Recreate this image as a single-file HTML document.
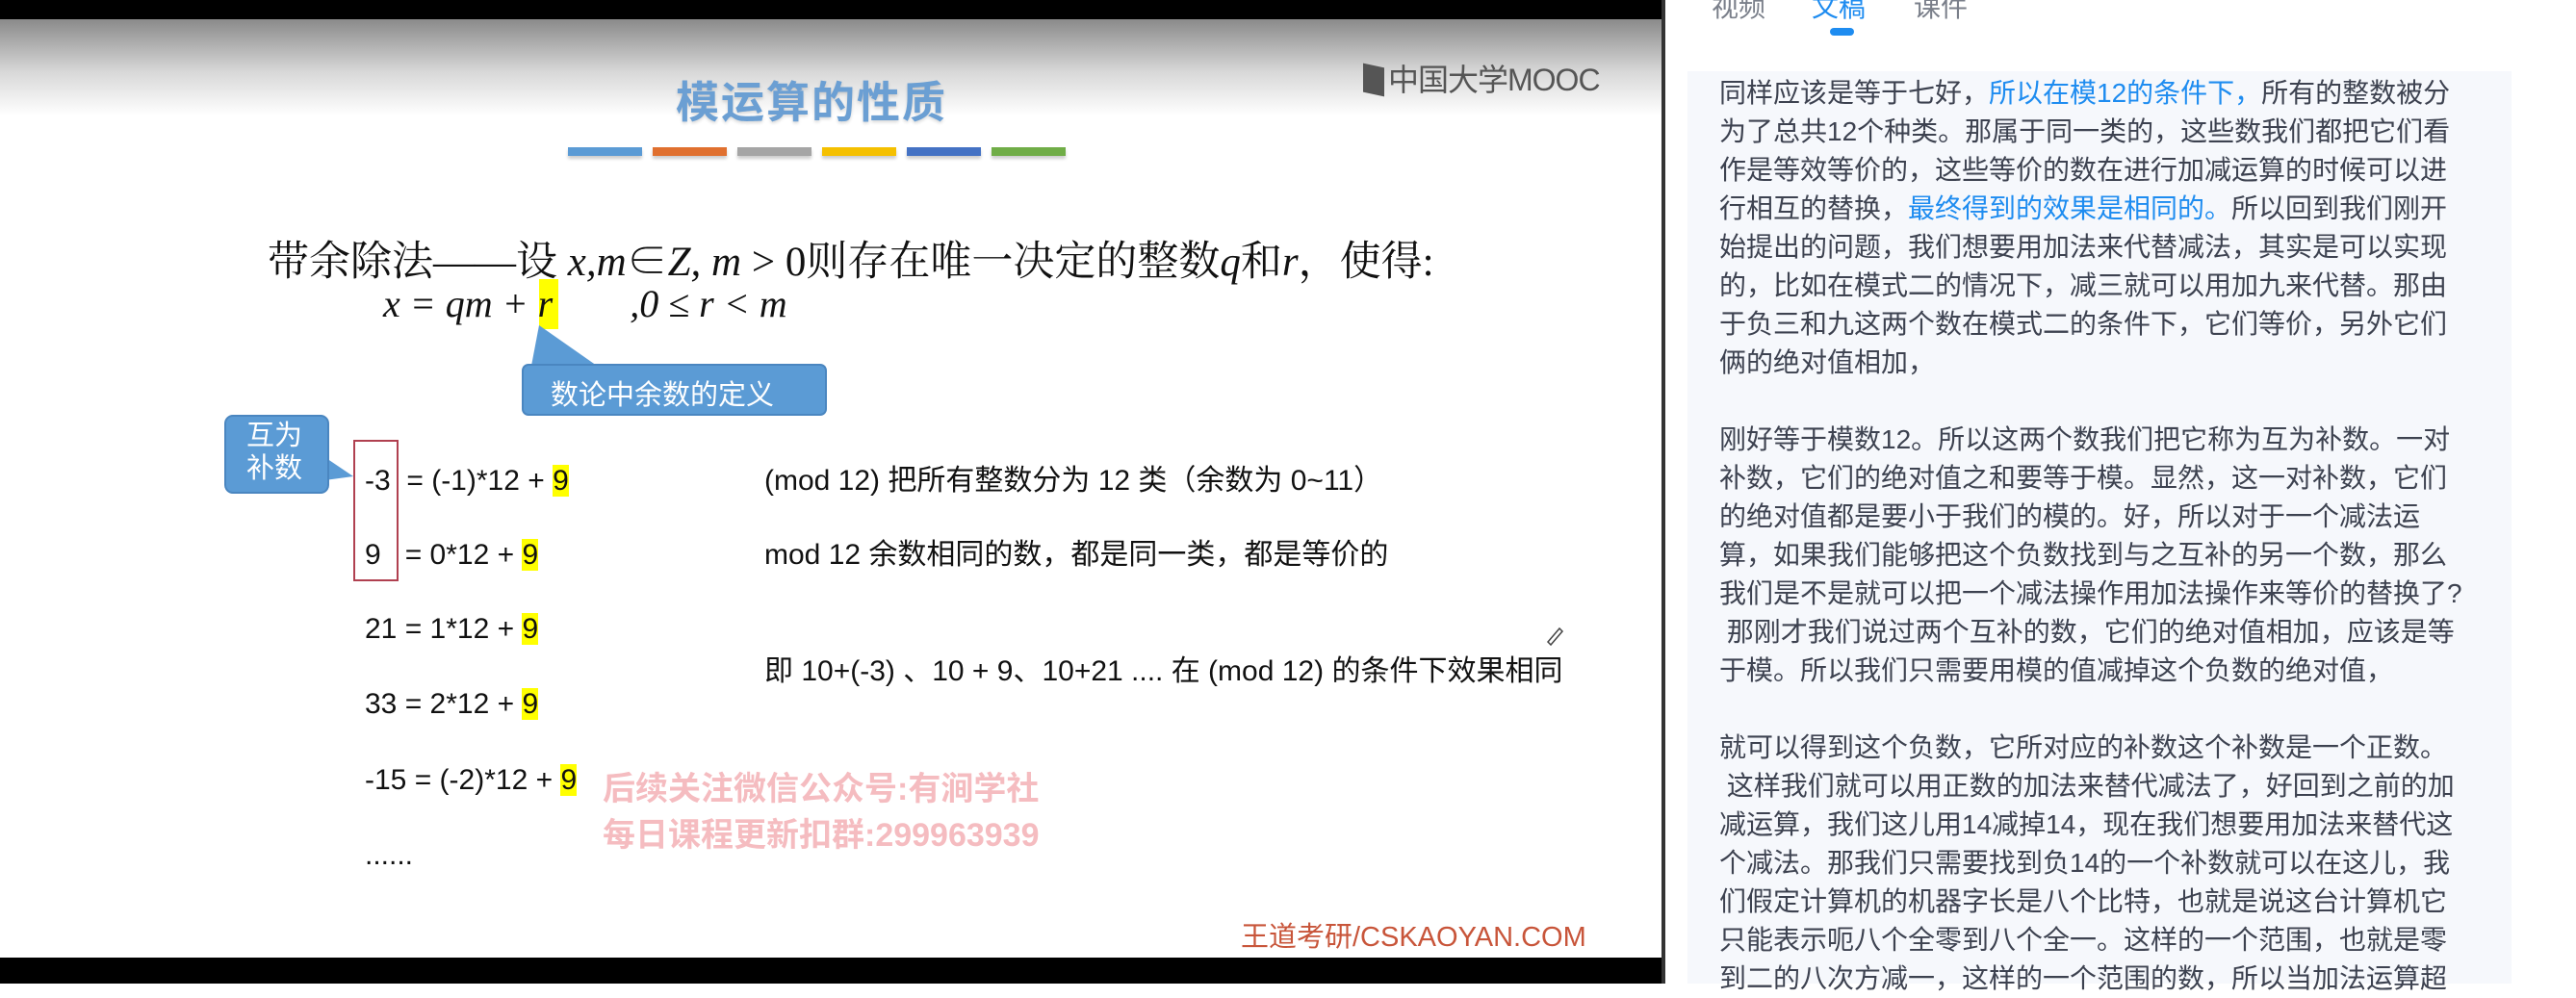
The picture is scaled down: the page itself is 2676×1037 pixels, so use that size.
<!DOCTYPE html>
<html><head><meta charset="utf-8"><style>
*{margin:0;padding:0;box-sizing:border-box}
body{width:2676px;height:1022px;overflow:hidden;background:#fff;position:relative;font-family:"Liberation Sans","Noto Sans CJK SC",sans-serif}
.a{position:absolute;white-space:nowrap}
#slide{position:absolute;left:0;top:0;width:1726px;height:1022px;background:#fff;overflow:hidden}
.bar{position:absolute;top:153px;width:77px;height:9px;box-shadow:0 3px 3px rgba(0,0,0,.2)}
.row{position:absolute;left:379px;font-size:30px;color:#111;line-height:40px}
.hl{background:#ffff00}
.rt{position:absolute;left:794px;font-size:30px;color:#111;line-height:40px}
#txt{position:absolute;left:1786px;top:77px;font-size:28px;line-height:40px;color:#3d4250;white-space:nowrap}
.b{color:#1e8cf0}
</style></head><body>
<div id="slide">
 <div class="a" style="left:0;top:0;width:1726px;height:20px;background:#000"></div>
 <div class="a" style="left:0;top:20px;width:1726px;height:100px;background:linear-gradient(#8a8a8a,#d8d8d8 55%,#fff)"></div>
 <div class="a" style="left:0;top:995px;width:1726px;height:27px;background:#000"></div>
 <div class="a" style="left:702px;top:70px;font-size:45px;color:#6b9fd3;font-weight:bold;letter-spacing:2px;text-shadow:0 2px 3px rgba(0,0,0,.15)">模运算的性质</div>
 <div class="a" style="left:1416px;top:58px;font-size:32px;color:#555;letter-spacing:-1px"><span style="display:inline-block;width:22px;height:30px;background:#555;vertical-align:-4px;margin-right:4px;transform:skewY(12deg)"></span>中国大学MOOC</div>
 <div class="bar" style="left:590px;background:#5b9bd5"></div>
 <div class="bar" style="left:678px;background:#e0702f"></div>
 <div class="bar" style="left:766px;background:#a5a5a5"></div>
 <div class="bar" style="left:854px;background:#f5c000"></div>
 <div class="bar" style="left:942px;background:#4472c4"></div>
 <div class="bar" style="left:1030px;background:#70ad47"></div>
 <div class="a" style="left:278px;top:238px;font-size:43px;color:#111;font-family:'Liberation Serif','Noto Serif CJK SC',serif">带余除法——设 <i>x,m</i>∈<i>Z, m</i> &gt; 0则存在唯一决定的整数<i>q</i>和<i>r</i>，使得:</div>
 <div class="a" style="left:560px;top:290px;width:20px;height:52px;background:#ffff00"></div>
 <div class="a" style="left:398px;top:292px;font-size:40px;color:#111;font-family:'Liberation Serif',serif;font-style:italic">x = qm + r<span style="display:inline-block;width:80px"></span>,0 ≤ r &lt; m</div>
 <svg class="a" style="left:0;top:0" width="1726" height="1022">
  <path d="M560 338 L620 380 L552 380 Z" fill="#5b9bd5"/>
  <rect x="543" y="379" width="315" height="52" rx="6" fill="#5b9bd5" stroke="#4a86c0" stroke-width="2"/>
  <path d="M330 470 L367 495 L330 500 Z" fill="#5b9bd5"/>
  <rect x="234" y="432" width="107" height="80" rx="8" fill="#5b9bd5" stroke="#4a86c0" stroke-width="2"/>
  <rect x="368" y="458" width="45" height="145" fill="none" stroke="#b04050" stroke-width="2"/>
  <path d="M1608 667 l12 -14 l3 3 l-12 14 z" fill="none" stroke="#444" stroke-width="1.5"/>
 </svg>
 <div class="a" style="left:572px;top:387px;font-size:29px;color:#fff">数论中余数的定义</div>
 <div class="a" style="left:256px;top:436px;font-size:29px;color:#fff;line-height:34px;white-space:normal;width:70px">互为<br>补数</div>
 <div class="row" style="top:480px">-3 &nbsp;= (-1)*12 + <span class="hl">9</span></div>
 <div class="row" style="top:557px">9 &nbsp;&nbsp;= 0*12 + <span class="hl">9</span></div>
 <div class="row" style="top:634px">21 = 1*12 + <span class="hl">9</span></div>
 <div class="row" style="top:712px">33 = 2*12 + <span class="hl">9</span></div>
 <div class="row" style="top:791px">-15 = (-2)*12 + <span class="hl">9</span></div>
 <div class="row" style="top:869px">......</div>
 <div class="rt" style="top:480px">(mod 12) 把所有整数分为 12 类（余数为 0~11）</div>
 <div class="rt" style="top:557px">mod 12 余数相同的数，都是同一类，都是等价的</div>
 <div class="rt" style="top:678px">即 10+(-3) 、10 + 9、10+21 .... 在 (mod 12) 的条件下效果相同</div>
 <div class="a" style="left:626px;top:796px;font-size:34px;font-weight:bold;color:#f5bcc0;line-height:48px">后续关注微信公众号:有涧学社<br>每日课程更新扣群:299963939</div>
 <div class="a" style="left:1289px;top:950px;font-size:29px;color:#c8553a">王道考研/CSKAOYAN.COM</div>
</div>
<div class="a" style="left:1726px;top:0;width:4px;height:1022px;background:#333"></div>
<div class="a" style="left:1778px;top:-14px;font-size:28px;color:#7a7f8a">视频</div>
<div class="a" style="left:1882px;top:-14px;font-size:28px;color:#1e8cf0">文稿</div>
<div class="a" style="left:1988px;top:-14px;font-size:28px;color:#7a7f8a">课件</div>
<div class="a" style="left:1901px;top:29px;width:25px;height:8px;border-radius:4px;background:#1e8cf0"></div>
<div class="a" style="left:1753px;top:74px;width:856px;height:948px;background:#f6f8fc"></div>
<div id="txt">同样应该是等于七好，<span class="b">所以在模12的条件下，</span>所有的整数被分<br>为了总共12个种类。那属于同一类的，这些数我们都把它们看<br>作是等效等价的，这些等价的数在进行加减运算的时候可以进<br>行相互的替换，<span class="b">最终得到的效果是相同的。</span>所以回到我们刚开<br>始提出的问题，我们想要用加法来代替减法，其实是可以实现<br>的，比如在模式二的情况下，减三就可以用加九来代替。那由<br>于负三和九这两个数在模式二的条件下，它们等价，另外它们<br>俩的绝对值相加，<br><br>刚好等于模数12。所以这两个数我们把它称为互为补数。一对<br>补数，它们的绝对值之和要等于模。显然，这一对补数，它们<br>的绝对值都是要小于我们的模的。好，所以对于一个减法运<br>算，如果我们能够把这个负数找到与之互补的另一个数，那么<br>我们是不是就可以把一个减法操作用加法操作来等价的替换了?<br>&nbsp;那刚才我们说过两个互补的数，它们的绝对值相加，应该是等<br>于模。所以我们只需要用模的值减掉这个负数的绝对值，<br><br>就可以得到这个负数，它所对应的补数这个补数是一个正数。<br>&nbsp;这样我们就可以用正数的加法来替代减法了，好回到之前的加<br>减运算，我们这儿用14减掉14，现在我们想要用加法来替代这<br>个减法。那我们只需要找到负14的一个补数就可以在这儿，我<br>们假定计算机的机器字长是八个比特，也就是说这台计算机它<br>只能表示呃八个全零到八个全一。这样的一个范围，也就是零<br>到二的八次方减一，这样的一个范围的数，所以当加法运算超</div>
</body></html>
